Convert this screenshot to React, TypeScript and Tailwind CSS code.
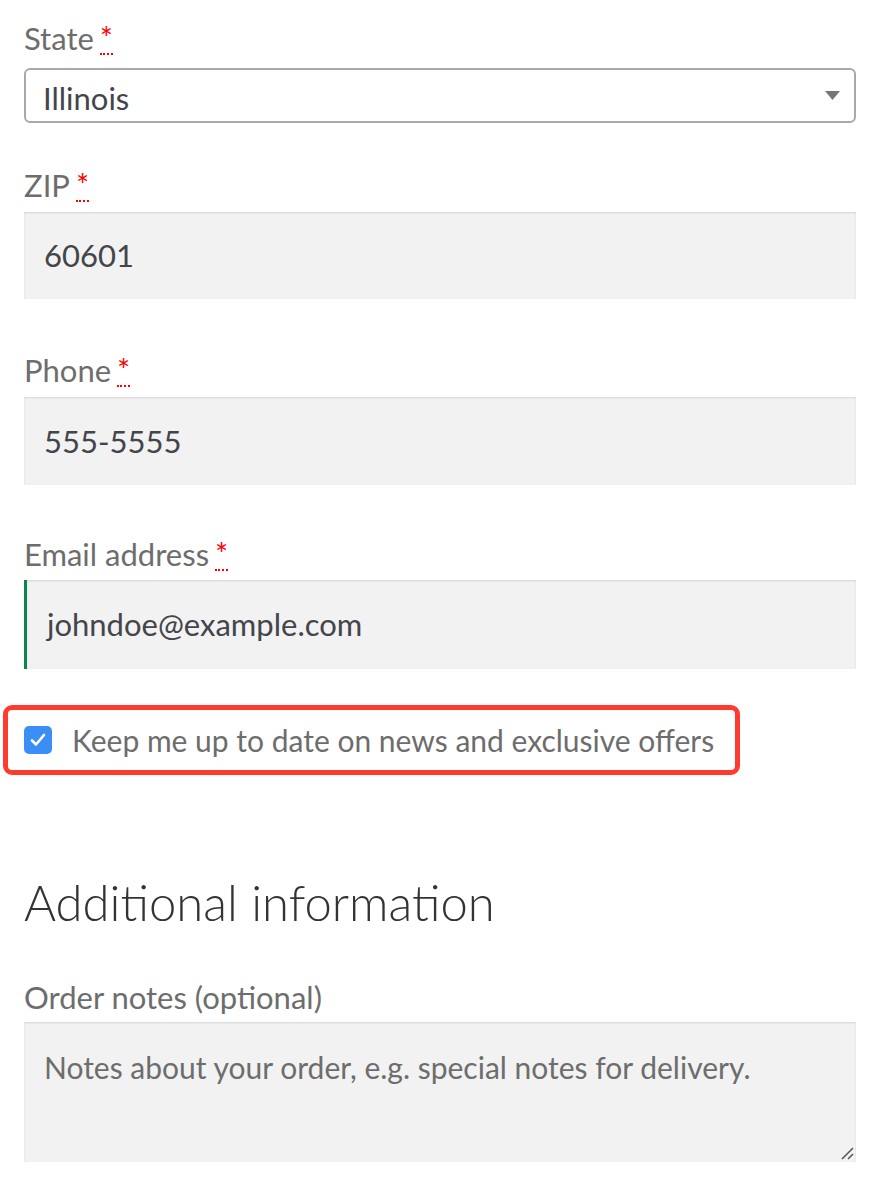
import React from "react";

const font = { fontFamily: "Lato, 'Open Sans', sans-serif" };

function Req() {
  return (
    <abbr
      title="required"
      className="ml-[6px] text-[#ff0000] no-underline border-b-2 border-dotted border-[#ff0000] leading-none"
    >
      *
    </abbr>
  );
}

function Label({ children, req }: { children: React.ReactNode; req?: boolean }) {
  return (
    <div className="h-[40px] flex items-center text-[31px] text-[#6d6d6d]">
      <span>{children}</span>
      {req && <Req />}
    </div>
  );
}

function Field({ value, h, extra = "" }: { value: string; h: string; extra?: string }) {
  return (
    <div
      className={`${h} ${extra} w-full bg-[#f2f2f2] shadow-[inset_0_1px_2px_rgba(0,0,0,0.12)] flex items-center pl-[20px] text-[31px] text-[#43454b]`}
    >
      {value}
    </div>
  );
}

export default function App() {
  return (
    <div className="bg-white min-h-[1181px] pt-[18px]" style={font}>
      <div className="ml-[24px] w-[832px]">
        <Label req>State</Label>
        <div className="mt-[10px] h-[55px] border-2 border-[#a9a9a9] rounded-[6px] flex items-center justify-between pl-[17px] pr-[14px] text-[31px] text-[#43454b]">
          <span className="pt-[5px]">Illinois</span>
          <svg width="15" height="9" viewBox="0 0 15 9">
            <path d="M0 0 L15 0 L7.5 9 Z" fill="#777" />
          </svg>
        </div>

        <div className="mt-[42px]">
          <Label req>ZIP</Label>
        </div>
        <div className="mt-[7px]">
          <Field value="60601" h="h-[87px]" />
        </div>

        <div className="mt-[51px]">
          <Label req>Phone</Label>
        </div>
        <div className="mt-[7px]">
          <Field value="555-5555" h="h-[88px]" />
        </div>

        <div className="mt-[49px]">
          <Label req>Email address</Label>
        </div>
        <div className="mt-[6px]">
          <Field value="johndoe@example.com" h="h-[89px]" extra="border-l-[3px] border-[#0f834d] pl-[17px]" />
        </div>

        <div className="mt-[36px] -ml-[21px] w-[737px] h-[70px] border-[5px] border-[#ff3b30] rounded-[9px] flex items-center pl-[16px] gap-[20px]">
          <div className="w-[28px] h-[28px] rounded-[5px] bg-[#3a8ef5] flex items-center justify-center">
            <svg width="16" height="14" viewBox="0 0 16 14">
              <path d="M2 7.5 L6 11.5 L14 2" fill="none" stroke="white" strokeWidth="2.6" strokeLinecap="round" strokeLinejoin="round" />
            </svg>
          </div>
          <span className="text-[30px] text-[#6d6d6d]">Keep me up to date on news and exclusive offers</span>
        </div>

        <h3 className="mt-[98px] h-[60px] flex items-center text-[49px] font-light text-[#333333]">
          Additional information
        </h3>

        <div className="mt-[44px]">
          <Label>Order notes (optional)</Label>
        </div>
        <div className="mt-[5px] relative h-[140px] w-full bg-[#f2f2f2] shadow-[inset_0_1px_2px_rgba(0,0,0,0.12)] pl-[20px] pt-[23px] text-[30px] text-[#6d6d6d]">
          Notes about your order, e.g. special notes for delivery.
          <svg className="absolute right-[2px] bottom-[2px]" width="14" height="14" viewBox="0 0 14 14">
            <path d="M13 2 L2 13 M13 8 L8 13" stroke="#555" strokeWidth="1.5" />
          </svg>
        </div>
      </div>
    </div>
  );
}
